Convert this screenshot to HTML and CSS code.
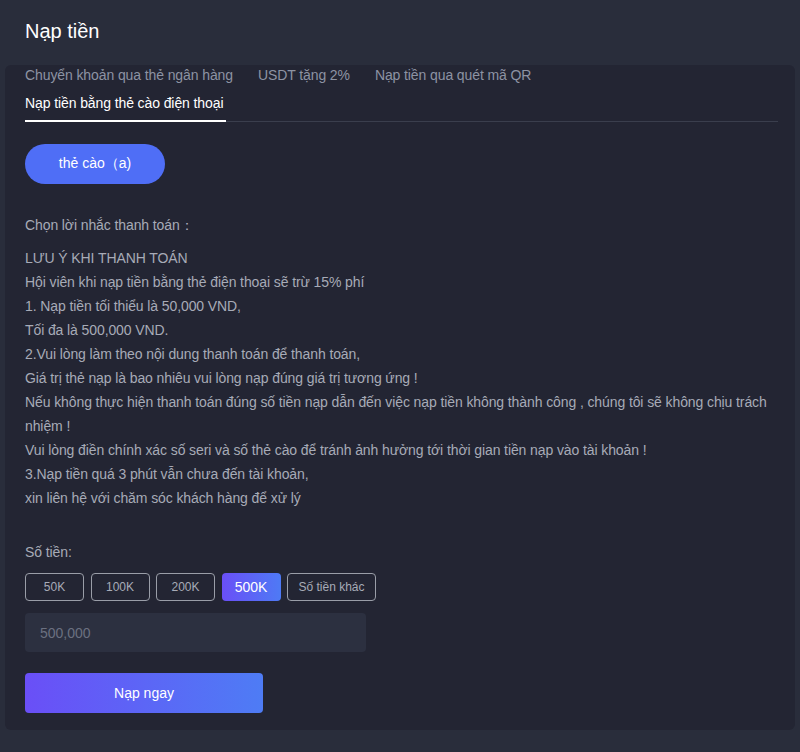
FILE: index.html
```html
<!DOCTYPE html>
<html>
<head>
	<title>Nạp tiền</title>
	<link rel="stylesheet" href="styles.css">
</head>
<body>
	<h1 class="page-title">Nạp tiền</h1>
	<div class="panel">
		<div class="tabs">
			<div class="tab-list">
				<span class="tab">Chuyển khoản qua thẻ ngân hàng</span>
				<span class="tab">USDT tặng 2%</span>
				<span class="tab">Nạp tiền qua quét mã QR</span>
				<span class="tab active">Nạp tiền bằng thẻ cào điện thoại</span>
			</div>
		</div>

		<button class="channel">thẻ cào（a)</button>

		<p class="label">Chọn lời nhắc thanh toán：</p>
		<div class="notes">
			LƯU Ý KHI THANH TOÁN<br>
			Hội viên khi nạp tiền bằng thẻ điện thoại sẽ trừ 15% phí<br>
			1. Nạp tiền tối thiểu là 50,000 VND,<br>
			Tối đa là 500,000 VND.<br>
			2.Vui lòng làm theo nội dung thanh toán để thanh toán,<br>
			Giá trị thẻ nạp là bao nhiêu vui lòng nạp đúng giá trị tương ứng !<br>
			Nếu không thực hiện thanh toán đúng số tiền nạp dẫn đến việc nạp tiền không thành công , chúng tôi sẽ không chịu trách nhiệm !<br>
			Vui lòng điền chính xác số seri và số thẻ cào để tránh ảnh hưởng tới thời gian tiền nạp vào tài khoản !<br>
			3.Nạp tiền quá 3 phút vẫn chưa đến tài khoản,<br>
			xin liên hệ với chăm sóc khách hàng để xử lý
		</div>

		<p class="label amount-label">Số tiền:</p>
		<div class="amounts">
			<button class="amount">50K</button>
			<button class="amount">100K</button>
			<button class="amount">200K</button>
			<button class="amount selected">500K</button>
			<button class="amount other">Số tiền khác</button>
		</div>
		<input class="amount-input" type="text" placeholder="500,000">
		<button class="submit">Nạp ngay</button>
	</div>
</body>
</html>
```

FILE: styles.css
```css
body {
	font-family: "Liberation Sans", Arial, sans-serif;
	background-color: #292d3b;
	color: #a7abb7;
	margin: 0;
	padding: 0;
	letter-spacing: -0.1px;
}

.page-title {
	margin: 0;
	padding: 19px 25px 0;
	height: 46px;
	font-size: 20px;
	font-weight: normal;
	line-height: 24px;
	color: #fff;
	letter-spacing: 0;
}

.panel {
	margin: 0 5px;
	padding: 0 17px 17px 20px;
	background-color: #232533;
	border-radius: 6px;
}

.tabs {
	border-bottom: 1px solid #3a3e4d;
}

.tab-list {
	display: flex;
	flex-wrap: wrap;
	column-gap: 25px;
	max-width: 600px;
}

.tab {
	font-size: 14px;
	line-height: 20px;
	padding-bottom: 7px;
	border-bottom: 2px solid transparent;
	color: #8d93a3;
	margin-bottom: -1px;
}

.tab.active {
	color: #fff;
	border-bottom-color: #fff;
	padding-right: 3px;
}

.channel {
	display: block;
	margin-top: 22px;
	width: 140px;
	height: 40px;
	border: none;
	border-radius: 20px;
	background-color: #4f6ef6;
	color: #fff;
	font-family: inherit;
	font-size: 14px;
}

.label {
	margin: 29px 0 0;
	font-size: 14px;
	line-height: 24px;
}

.notes {
	margin-top: 9px;
	font-size: 14px;
	line-height: 24px;
}

.amount-label {
	margin-top: 30px;
}

.amounts {
	display: flex;
	gap: 6.5px;
	margin-top: 9px;
}

.amount {
	height: 28px;
	width: 59px;
	border: 1px solid #9a9ea8;
	border-radius: 4px;
	background: transparent;
	color: #a7abb7;
	font-family: inherit;
	font-size: 12px;
}

.amount.selected {
	border: none;
	background: linear-gradient(90deg, #6a4ff7, #4e7af5);
	color: #fff;
	font-size: 14px;
}

.amount.other {
	width: 89px;
}

.amount-input {
	display: block;
	box-sizing: border-box;
	margin-top: 12px;
	width: 341px;
	height: 39px;
	padding: 0 15px;
	border: none;
	border-radius: 4px;
	background-color: #2c3040;
	font-family: inherit;
	font-size: 14px;
	color: #fff;
}

.amount-input::placeholder {
	color: #6b7080;
}

.submit {
	display: block;
	margin-top: 21px;
	width: 238px;
	height: 40px;
	border: none;
	border-radius: 4px;
	background: linear-gradient(90deg, #6a4ff7, #4e7cf5);
	color: #fff;
	font-family: inherit;
	font-size: 14px;
}
```
